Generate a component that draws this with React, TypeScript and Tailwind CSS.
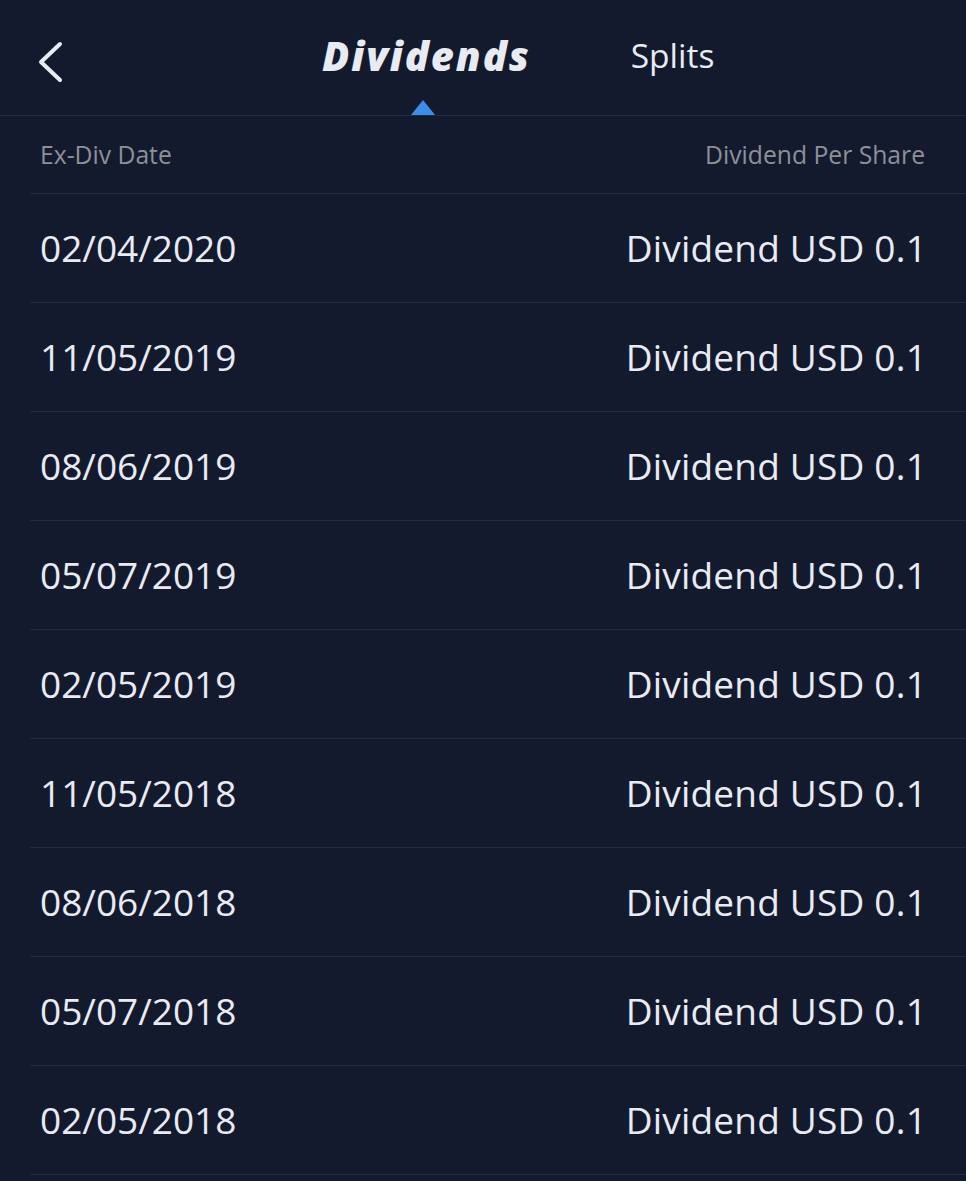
import React from "react";

const rows = [
  "02/04/2020",
  "11/05/2019",
  "08/06/2019",
  "05/07/2019",
  "02/05/2019",
  "11/05/2018",
  "08/06/2018",
  "05/07/2018",
  "02/05/2018",
];

export default function App() {
  return (
    <div
      className="w-[966px] h-[1181px] overflow-hidden bg-[#141a2e] text-[#e9ebf3]"
      style={{ fontFamily: '"Open Sans", sans-serif' }}
    >
      <div className="flex h-[116px] items-start border-b border-[#222a3e]">
        <button className="ml-[37px] mt-[41px] flex">
          <svg width="26" height="42" viewBox="0 0 26 42" fill="none">
            <path d="M23 3 L4 21 L23 39" stroke="#e9ebf3" strokeWidth="4" strokeLinecap="round" strokeLinejoin="round" />
          </svg>
        </button>
        <div className="ml-[259px] mt-[30px] flex flex-col items-center">
          <span className="text-[40px] font-extrabold italic leading-[52px] tracking-[1.9px]">Dividends</span>
          <div className="mt-[18px] mr-[6px] h-0 w-0 border-l-[12px] border-r-[12px] border-b-[15px] border-l-transparent border-r-transparent border-b-[#3d8eea]" />
        </div>
        <span className="ml-[100px] mt-[29px] text-[33.5px] leading-[52px]">Splits</span>
      </div>
      <div className="ml-[30px]">
        <div className="flex h-[78px] items-center justify-between border-b border-[#222a3e] pl-[10px] pr-[41px] text-[24.7px] text-[#8d9098]">
          <span>Ex-Div Date</span>
          <span>Dividend Per Share</span>
        </div>
        {rows.map((d) => (
          <div
            key={d}
            className="flex h-[109px] items-center justify-between border-b border-[#222a3e] pl-[10px] pr-[39px] text-[37px]"
          >
            <span>{d}</span>
            <span className="tracking-[0.2px]">Dividend USD 0.1</span>
          </div>
        ))}
      </div>
    </div>
  );
}
